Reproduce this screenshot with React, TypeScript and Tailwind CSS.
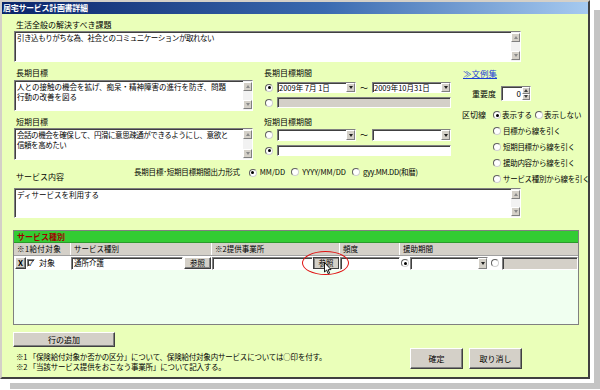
import React from "react";

const sunk =
  "border-t border-l border-t-[#808080] border-l-[#808080] border-b border-r border-b-white border-r-white shadow-[inset_1px_1px_0_#404040]";
const raised =
  "bg-[#d4d0c8] border border-t-white border-l-white border-b-[#404040] border-r-[#404040] shadow-[inset_-1px_-1px_0_#808080]";
const smallBtn =
  "bg-[#d4d0c8] border border-t-white border-l-white border-b-[#808080] border-r-[#808080]";

function Tri({ up, color = "#000" }: { up?: boolean; color?: string }) {
  return up ? (
    <span className="w-0 h-0 border-x-[2.5px] border-x-transparent border-b-[3px]" style={{ borderBottomColor: color }} />
  ) : (
    <span className="w-0 h-0 border-x-[2.5px] border-x-transparent border-t-[3px]" style={{ borderTopColor: color }} />
  );
}

function ArrowBtn({ up }: { up?: boolean }) {
  return (
    <div className={`w-[9px] h-[9px] flex items-center justify-center ${smallBtn}`}>
      <Tri up={up} color="#8a8a8a" />
    </div>
  );
}

function TextBox({ cls, children, tight }: { cls: string; children?: React.ReactNode; tight?: boolean }) {
  return (
    <div className={`${cls} flex bg-white ${sunk}`}>
      <div
        className={`flex-1 text-[7.5px] leading-[10px] pl-[2px] pt-[1px] text-black whitespace-nowrap overflow-hidden ${
          tight ? "tracking-[-0.45px]" : ""
        }`}
      >
        {children}
      </div>
      <div className="w-[9px] flex flex-col bg-[#f2f2f2] py-[1px]">
        <ArrowBtn up />
        <div className="flex-1" />
        <ArrowBtn />
      </div>
    </div>
  );
}

function DropBtn() {
  return (
    <div className={`w-[9px] h-full flex items-center justify-center ${smallBtn}`}>
      <Tri color="#202020" />
    </div>
  );
}

function Combo({ cls, text }: { cls: string; text?: string }) {
  return (
    <div className={`${cls} h-full flex bg-white ${sunk}`}>
      <div className="flex-1 text-[7.5px] leading-none flex items-center pl-[1px] whitespace-nowrap overflow-hidden">
        {text}
      </div>
      <DropBtn />
    </div>
  );
}

function Radio({ checked }: { checked?: boolean }) {
  return (
    <span className="inline-flex items-center justify-center w-[8px] h-[8px] rounded-full bg-white border border-t-[#606060] border-l-[#606060] border-b-[#d0d0d0] border-r-[#d0d0d0] shrink-0">
      {checked && <span className="w-[3px] h-[3px] rounded-full bg-black" />}
    </span>
  );
}

const REF = "\u203B\uFE0E";

export default function App() {
  return (
    <div className="w-[600px] h-[390px] bg-white overflow-hidden font-['Noto_Sans_CJK_JP',sans-serif] text-black">
      <div className="w-[590px] h-[379px] flex flex-col border-2 border-t-[#d4d0c8] border-l-[#d4d0c8] border-r-[#404040] border-b-[#404040] shadow-[4px_4px_0_0_#ffffff,10px_10px_0_0_#c4c4c4]">
        {/* title bar */}
        <div className="h-[12px] shrink-0 bg-[linear-gradient(to_right,#0a246a,#3a6ab0_55%,#a6caf0)] flex items-center pl-[1px]">
          <span className="text-white font-bold text-[8px] leading-none tracking-[-0.3px]">居宅サービス計画書詳細</span>
        </div>

        {/* body */}
        <div className="flex-1 bg-[#eaffb9] pl-[12px] flex flex-col">
          <div className="mt-[5px] h-[12px] leading-[12px] text-[8px] pl-[2px]">生活全般の解決すべき課題</div>
          <TextBox cls="w-[507px] h-[31px]" tight>
            引き込もりがちな為、社会とのコミュニケーションが取れない
          </TextBox>

          {/* goals section */}
          <div className="h-[126px] flex">
            <div className="w-[438px] flex flex-col">
              <div className="flex">
                {/* left */}
                <div className="w-[239px] flex flex-col">
                  <div className="mt-[5px] h-[12px] leading-[12px] text-[8px] pl-[2px]">長期目標</div>
                  <TextBox cls="mt-[1px] w-[239px] h-[31px]">
                    人との接触の機会を拡げ、痴呆・精神障害の進行を防ぎ、問題
                    <br />
                    行動の改善を図る
                  </TextBox>
                  <div className="mt-[5px] h-[12px] leading-[12px] text-[8px] pl-[2px]">短期目標</div>
                  <TextBox cls="w-[239px] h-[32px]" tight>
                    会話の機会を確保して、円滑に意思疎通ができるようにし、意欲と
                    <br />
                    信頼を高めたい
                  </TextBox>
                </div>
                {/* middle */}
                <div className="ml-[11px] w-[188px] flex flex-col">
                  <div className="mt-[5px] h-[12px] leading-[12px] text-[8px]">長期目標期間</div>
                  <div className="mt-[3px] h-[11px] flex items-center pl-[1px]">
                    <Radio checked />
                    <div className="ml-[4px] h-[11px] flex items-center">
                      <Combo cls="w-[79px]" text="2009年 7月 1日" />
                      <span className="w-[16px] text-center text-[8px] leading-none">～</span>
                      <Combo cls="w-[79px]" text="2009年10月31日" />
                    </div>
                  </div>
                  <div className="mt-[4px] h-[11px] flex items-center pl-[1px]">
                    <Radio />
                    <div className={`ml-[4px] w-[174px] h-[11px] bg-[#d4d0c8] ${sunk}`} />
                  </div>
                  <div className="mt-[8px] h-[12px] leading-[12px] text-[8px]">短期目標期間</div>
                  <div className="mt-[1px] h-[12px] flex items-center pl-[1px]">
                    <Radio />
                    <div className="ml-[4px] h-[12px] flex items-center">
                      <Combo cls="w-[79px]" />
                      <span className="w-[16px] text-center text-[8px] leading-none">～</span>
                      <Combo cls="w-[79px]" />
                    </div>
                  </div>
                  <div className="mt-[4px] h-[11px] flex items-center pl-[1px]">
                    <Radio checked />
                    <div className={`ml-[4px] w-[174px] h-[11px] bg-white ${sunk}`} />
                  </div>
                </div>
              </div>
              {/* service content label row */}
              <div className="mt-[6px] h-[17px] flex">
                <div className="w-[120px] self-end h-[12px] leading-[12px] text-[8px] pl-[2px]">サービス内容</div>
                <div className="self-start h-[12px] flex items-center text-[7.5px] leading-none whitespace-nowrap">
                  <span className="tracking-[-0.2px]">長期目標･短期目標期間出力形式</span>
                  <span className="ml-[9px]"><Radio checked /></span>
                  <span className="ml-[3px]">MM/DD</span>
                  <span className="ml-[6px]"><Radio /></span>
                  <span className="ml-[3px]">YYYY/MM/DD</span>
                  <span className="ml-[6px]"><Radio /></span>
                  <span className="ml-[3px] tracking-[-0.3px]">gyy.MM.DD(和暦)</span>
                </div>
              </div>
            </div>

            {/* right column */}
            <div className="ml-[9px] flex-1 flex flex-col">
              <div className="mt-[5px] h-[12px] leading-[12px] pl-[2px] text-[8.5px] text-[#1a3fd6] underline">
                ≫文例集
              </div>
              <div className="mt-[7px] h-[15px] flex items-center pl-[11px]">
                <span className="text-[8px] leading-none">重要度</span>
                <div className={`ml-[5px] w-[30px] h-[15px] flex bg-white ${sunk}`}>
                  <div className="flex-1 text-right pr-[1px] text-[8px] leading-[13px]">0</div>
                  <div className="w-[8px] flex flex-col">
                    <div className={`flex-1 flex items-center justify-center ${smallBtn}`}>
                      <Tri up color="#404040" />
                    </div>
                    <div className={`flex-1 flex items-center justify-center ${smallBtn}`}>
                      <Tri color="#404040" />
                    </div>
                  </div>
                </div>
              </div>
              <div className="mt-[8px] h-[12px] flex items-center pl-[1px] text-[7.5px] leading-none whitespace-nowrap">
                <span className="w-[31px] text-[8px]">区切線</span>
                <Radio checked />
                <span className="ml-[1px]">表示する</span>
                <span className="ml-[3px]"><Radio /></span>
                <span className="ml-[1px]">表示しない</span>
              </div>
              <div className="mt-[2px] flex flex-col text-[7.5px] leading-none whitespace-nowrap tracking-[-0.3px]">
                {["目標から線を引く", "短期目標から線を引く", "援助内容から線を引く", "サービス種別から線を引く"].map((t) => (
                  <div key={t} className="h-[16px] flex items-center pl-[32px]">
                    <Radio />
                    <span className="ml-[2px]">{t}</span>
                  </div>
                ))}
              </div>
            </div>
          </div>

          <TextBox cls="w-[507px] h-[30px]">ディサービスを利用する</TextBox>

          {/* service table */}
          <div className="mt-[12px] -ml-[1px] w-[566px] border border-[#808080] flex flex-col">
            <div className="h-[12px] bg-[#33cc33] border-b border-[#2a9a2a] flex items-center pl-[3px]">
              <span className="text-[8px] font-bold text-[#a00000] leading-none">サービス種別</span>
            </div>
            <div className="h-[13px] bg-[#d4d0c8] flex text-[7.5px] leading-none text-black border-b border-[#a0a0a0]">
              <div className="w-[57px] flex items-center pl-[3px] border-r border-white tracking-[0.4px]">
                {REF}1給付対象
              </div>
              <div className="w-[141px] flex items-center pl-[3px] border-r border-white">サービス種別</div>
              <div className="w-[128px] flex items-center pl-[3px] border-r border-white">
                {REF}2提供事業所
              </div>
              <div className="w-[60px] flex items-center pl-[3px] border-r border-white">頻度</div>
              <div className="flex-1 flex items-center pl-[3px]">援助期間</div>
            </div>
            <div className="h-[14px] flex bg-white text-[8px] leading-none">
              <div className="w-[57px] flex items-center pl-[1px]">
                <div className={`w-[11px] h-[12px] flex items-center justify-center text-[8px] font-bold ${raised}`}>X</div>
                <span className={`ml-[1px] w-[8px] h-[8px] flex items-center justify-center bg-white ${sunk} text-[7px] leading-none`}>✓</span>
                <span className="ml-[4px]">対象</span>
              </div>
              <div className="w-[141px] flex items-center">
                <div className={`w-[112px] h-[13px] flex items-center pl-[2px] bg-white ${sunk} text-[7.5px]`}>通所介護</div>
                <div className={`ml-[1px] w-[27px] h-[12px] flex items-center justify-center text-[7.5px] ${raised}`}>参照</div>
              </div>
              <div className="w-[128px] flex items-center">
                <div className={`w-[101px] h-[13px] bg-white ${sunk}`} />
                <div className="relative">
                  <div className="w-[26px] h-[12px] flex items-center justify-center text-[7.5px] bg-[#d4d0c8] border border-[#404040] shadow-[inset_1px_1px_0_#808080]">
                    参照
                  </div>
                  <div className="absolute left-[-11px] top-[-6px] w-[47px] h-[24px] rounded-[50%] border-[1.5px] border-[#e01010]" />
                  <svg className="absolute left-[11px] top-[5px]" width="8" height="13" viewBox="0 0 8 13">
                    <path d="M0.5 0.5 L0.5 10 L2.7 8 L4.2 11.8 L5.6 11.2 L4.2 7.6 L7 7.6 Z" fill="#fff" stroke="#000" strokeWidth="0.9" strokeLinejoin="round" />
                  </svg>
                </div>
              </div>
              <div className="w-[60px] flex items-center">
                <div className={`w-[60px] h-[13px] bg-white ${sunk}`} />
              </div>
              <div className="flex-1 flex items-center">
                <div className="w-[10px] flex justify-center"><Radio checked /></div>
                <div className="h-[13px] flex"><Combo cls="w-[78px]" /></div>
                <div className="w-[14px] flex justify-center"><Radio /></div>
                <div className={`flex-1 h-[13px] bg-[#d4d0c8] ${sunk}`} />
              </div>
            </div>
            <div className="h-[54px] bg-[#f0fff0]" />
          </div>

          <div className={`mt-[7px] -ml-[1px] w-[102px] h-[15px] flex items-center justify-center text-[8px] leading-none ${raised}`}>
            行の追加
          </div>

          <div className="flex">
            <div className="w-[396px] mt-[5px] pl-[2px] text-[7.5px] leading-[10px] whitespace-nowrap tracking-[-0.2px]">
              <div>{REF}1 「保険給付対象か否かの区分」について、保険給付対象内サービスについては○印を付す。</div>
              <div>{REF}2 「当該サービス提供をおこなう事業所」について記入する。</div>
            </div>
            <div className="mt-[1px] flex gap-[6px]">
              <div className={`w-[53px] h-[21px] flex items-center justify-center text-[8px] leading-none ${raised}`}>確定</div>
              <div className={`w-[53px] h-[21px] flex items-center justify-center text-[8px] leading-none ${raised}`}>取り消し</div>
            </div>
          </div>
        </div>
      </div>
    </div>
  );
}
